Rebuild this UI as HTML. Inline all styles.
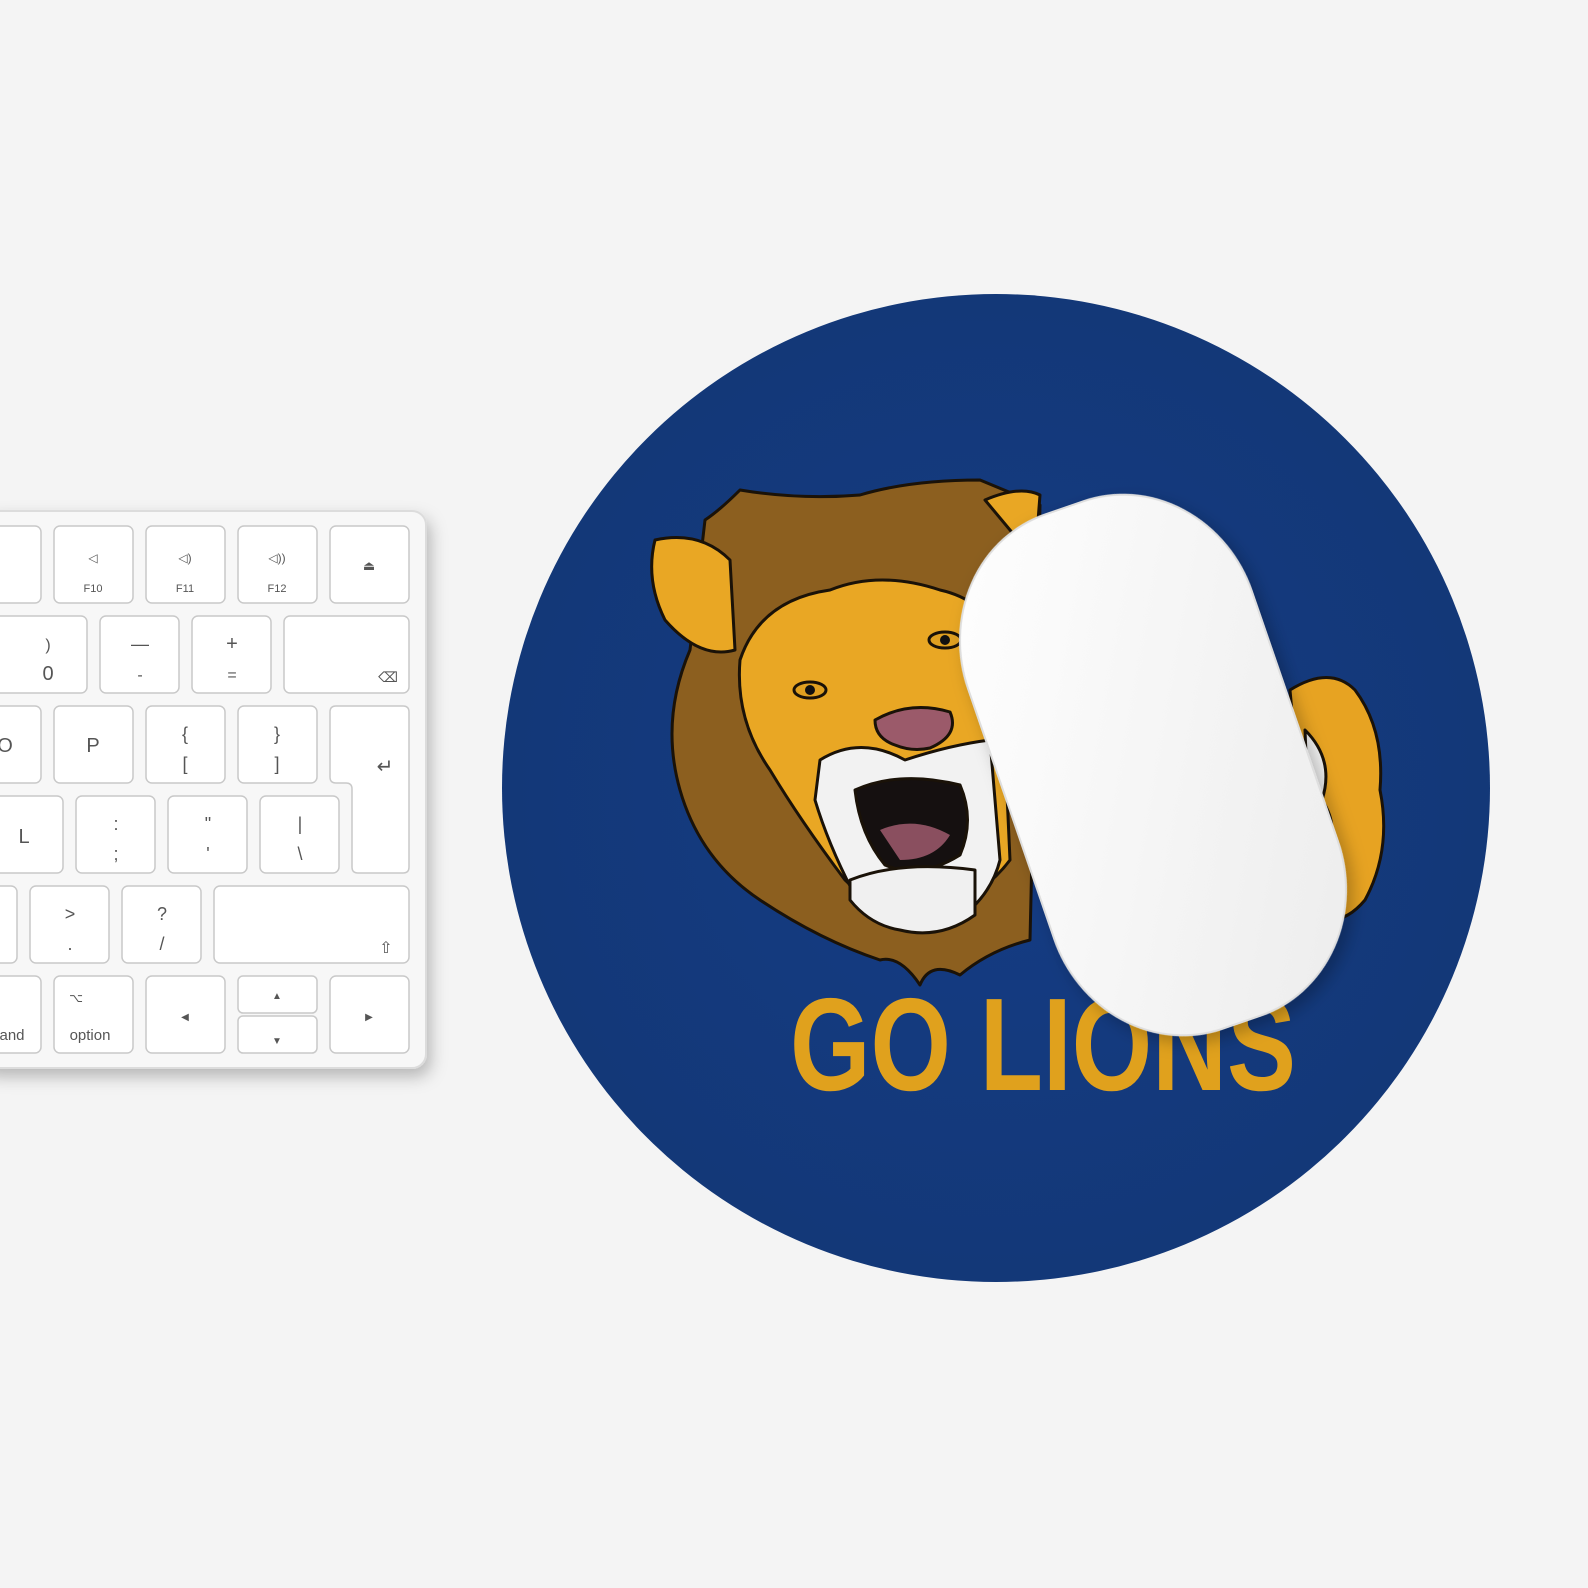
<!DOCTYPE html>
<html><head><style>
html,body{margin:0;padding:0;background:#f4f4f4;}
body{width:1588px;height:1588px;overflow:hidden;}
svg{display:block}
.k{fill:#fff;stroke:#c9c9c9;stroke-width:1.5}
.t{font-family:"Liberation Sans",sans-serif;fill:#555;text-anchor:middle}
</style></head><body>
<svg width="1588" height="1588" viewBox="0 0 1588 1588">
<defs>
<radialGradient id="pad" cx="50%" cy="50%" r="50%"><stop offset="0" stop-color="#153c85"/><stop offset="1" stop-color="#133878"/></radialGradient>
<linearGradient id="ms" x1="0" y1="0" x2="1" y2="1"><stop offset="0" stop-color="#ffffff"/><stop offset="1" stop-color="#ececec"/></linearGradient>
<filter id="sh" x="-20%" y="-20%" width="140%" height="140%"><feDropShadow dx="4" dy="8" stdDeviation="8" flood-opacity="0.25"/></filter>
</defs>
<rect width="1588" height="1588" fill="#f4f4f4"/>
<!-- keyboard -->
<rect x="-20" y="511" width="446" height="557" rx="14" fill="#f7f7f7" stroke="#dcdcdc" stroke-width="2" filter="url(#sh)"/>
<g>
<rect class="k" x="-30" y="526" width="71" height="77" rx="6"/>
<rect class="k" x="54" y="526" width="79" height="77" rx="6"/>
<rect class="k" x="146" y="526" width="79" height="77" rx="6"/>
<rect class="k" x="238" y="526" width="79" height="77" rx="6"/>
<rect class="k" x="330" y="526" width="79" height="77" rx="6"/>
<text class="t" x="93" y="592" font-size="11">F10</text>
<text class="t" x="185" y="592" font-size="11">F11</text>
<text class="t" x="277" y="592" font-size="11">F12</text>
<text class="t" x="93" y="562" font-size="12">◁</text>
<text class="t" x="185" y="562" font-size="12">◁)</text>
<text class="t" x="277" y="562" font-size="12">◁))</text>
<text class="t" x="369" y="570" font-size="13">⏏</text>

<rect class="k" x="-30" y="616" width="117" height="77" rx="6"/>
<rect class="k" x="100" y="616" width="79" height="77" rx="6"/>
<rect class="k" x="192" y="616" width="79" height="77" rx="6"/>
<rect class="k" x="284" y="616" width="125" height="77" rx="6"/>
<text class="t" x="48" y="650" font-size="16">)</text><text class="t" x="48" y="680" font-size="20">0</text>
<text class="t" x="140" y="650" font-size="18">—</text><text class="t" x="140" y="680" font-size="16">-</text>
<text class="t" x="232" y="650" font-size="20">+</text><text class="t" x="232" y="680" font-size="16">=</text>
<text class="t" x="388" y="682" font-size="14">⌫</text>

<rect class="k" x="-30" y="706" width="71" height="77" rx="6"/>
<rect class="k" x="54" y="706" width="79" height="77" rx="6"/>
<rect class="k" x="146" y="706" width="79" height="77" rx="6"/>
<rect class="k" x="238" y="706" width="79" height="77" rx="6"/>
<path class="k" d="M336 706 H403 Q409 706 409 712 V867 Q409 873 403 873 H358 Q352 873 352 867 V789 Q352 783 346 783 H336 Q330 783 330 777 V712 Q330 706 336 706Z"/>
<text class="t" x="5" y="752" font-size="20">O</text>
<text class="t" x="93" y="752" font-size="20">P</text>
<text class="t" x="185" y="740" font-size="18">{</text><text class="t" x="185" y="770" font-size="18">[</text>
<text class="t" x="277" y="740" font-size="18">}</text><text class="t" x="277" y="770" font-size="18">]</text>
<text class="t" x="385" y="773" font-size="20">↵</text>

<rect class="k" x="-30" y="796" width="93" height="77" rx="6"/>
<rect class="k" x="76" y="796" width="79" height="77" rx="6"/>
<rect class="k" x="168" y="796" width="79" height="77" rx="6"/>
<rect class="k" x="260" y="796" width="79" height="77" rx="6"/>
<text class="t" x="24" y="843" font-size="20">L</text>
<text class="t" x="116" y="830" font-size="18">:</text><text class="t" x="116" y="860" font-size="18">;</text>
<text class="t" x="208" y="830" font-size="18">"</text><text class="t" x="208" y="860" font-size="18">'</text>
<text class="t" x="300" y="830" font-size="18">|</text><text class="t" x="300" y="860" font-size="18">\</text>

<rect class="k" x="-30" y="886" width="47" height="77" rx="6"/>
<rect class="k" x="30" y="886" width="79" height="77" rx="6"/>
<rect class="k" x="122" y="886" width="79" height="77" rx="6"/>
<rect class="k" x="214" y="886" width="195" height="77" rx="6"/>
<text class="t" x="70" y="920" font-size="18">&gt;</text><text class="t" x="70" y="950" font-size="18">.</text>
<text class="t" x="162" y="920" font-size="18">?</text><text class="t" x="162" y="950" font-size="18">/</text>
<text class="t" x="386" y="953" font-size="16">⇧</text>

<rect class="k" x="-30" y="976" width="71" height="77" rx="6"/>
<rect class="k" x="54" y="976" width="79" height="77" rx="6"/>
<rect class="k" x="146" y="976" width="79" height="77" rx="6"/>
<rect class="k" x="238" y="976" width="79" height="37" rx="5"/>
<rect class="k" x="238" y="1016" width="79" height="37" rx="5"/>
<rect class="k" x="330" y="976" width="79" height="77" rx="6"/>
<text class="t" x="12" y="1040" font-size="15">and</text>
<text class="t" x="90" y="1040" font-size="15">option</text>
<text class="t" x="76" y="1002" font-size="12">⌥</text>
<text class="t" x="185" y="1020" font-size="10">◀</text>
<text class="t" x="277" y="999" font-size="10">▲</text>
<text class="t" x="277" y="1044" font-size="10">▼</text>
<text class="t" x="369" y="1020" font-size="10">▶</text>
</g>
<!-- mousepad -->
<circle cx="996" cy="788" r="494" fill="url(#pad)"/>
<!-- lion -->
<g stroke="#1a1208" stroke-width="3" stroke-linejoin="round">
<path d="M1290 690 Q1330 665 1355 690 Q1385 730 1380 790 Q1392 850 1365 900 Q1340 930 1310 915 Z" fill="#e7a322"/>
<path d="M1305 730 Q1335 760 1322 800 Q1342 830 1322 860 Q1340 890 1312 900 Z" fill="#f2f2f2"/>
<path d="M740 490 Q800 500 860 495 Q910 480 980 480 L1040 505 L1030 940 Q990 950 960 975 Q930 960 920 985 Q900 955 880 960 Q820 940 760 900 Q700 860 680 790 Q660 720 690 650 L705 520 Q720 510 740 490Z" fill="#8c5f1f"/>
<path d="M655 540 Q700 530 730 560 L735 650 Q700 660 665 620 Q645 580 655 540Z" fill="#e9a724"/>
<path d="M740 660 Q760 600 830 590 Q880 570 940 590 Q985 600 1000 640 L1010 860 Q980 900 930 910 Q880 915 845 880 Q800 820 770 770 Q735 720 740 660Z" fill="#e9a724"/>
<path d="M875 720 Q910 700 950 712 Q960 735 930 748 Q912 752 895 745 Q875 738 875 720Z" fill="#9b5a6a"/>
<path d="M820 760 Q860 735 905 760 Q950 745 990 740 L1000 860 Q990 900 950 925 Q900 930 860 905 Q830 850 815 800Z" fill="#f2f2f2"/>
<path d="M855 790 Q900 770 960 785 Q975 820 960 855 Q920 880 885 865 Q860 835 855 790Z" fill="#151010"/>
<path d="M880 830 Q915 815 950 835 Q935 860 900 860Z" fill="#8a4f5f" stroke="none"/>
<path d="M850 880 Q900 860 975 870 L975 915 Q940 940 900 930 Q870 925 850 900Z" fill="#f0f0f0"/>
<ellipse cx="810" cy="690" rx="16" ry="8" fill="#e0a020"/>
<ellipse cx="945" cy="640" rx="16" ry="8" fill="#e0a020"/>
<circle cx="810" cy="690" r="5" fill="#111" stroke="none"/>
<circle cx="945" cy="640" r="5" fill="#111" stroke="none"/>
<path d="M985 500 Q1020 485 1040 495 L1035 560 Z" fill="#e9a724"/>
</g>
<text x="790" y="1090" font-family="Liberation Sans,sans-serif" font-weight="bold" font-size="132" fill="#e0a11d" textLength="506" lengthAdjust="spacingAndGlyphs">GO LIONS</text>
<g transform="translate(1153 765) rotate(-19)" filter="url(#sh)">
<rect x="-150" y="-272" width="300" height="544" rx="130" ry="140" fill="url(#ms)" stroke="#dedede" stroke-width="2"/>
</g>
</svg>
</body></html>
